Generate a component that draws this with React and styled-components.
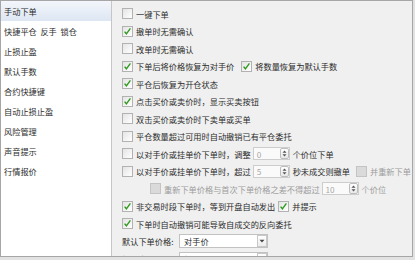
import React from 'react';
import styled, { createGlobalStyle } from 'styled-components';

const GlobalStyle = createGlobalStyle`
  html, body {
    margin: 0;
    padding: 0;
    background: #e2e2e2;
  }
  body {
    font-family: "Noto Sans CJK SC", "Noto Sans", sans-serif;
    font-size: 8.2px;
    color: #2b2b2b;
  }
`;

const Frame = styled.div`
  width: 413px;
  height: 257px;
  box-sizing: border-box;
  border: 1px solid #a6a6a6;
  display: flex;
  overflow: hidden;
`;

const Sidebar = styled.div`
  width: 110px;
  flex-shrink: 0;
  background: #fff;
  border-right: 1px solid #c6c6c6;
`;

const NavItem = styled.div`
  height: 20px;
  line-height: 20px;
  padding-left: 3px;
  white-space: pre;
  background: ${(p) => (p.$active ? 'linear-gradient(#f3f6fb, #dde6f3)' : 'transparent')};
`;

const Content = styled.div`
  flex: 1;
  background: #f0f0f0;
  padding: 4px 0 0 10px;
`;

const Row = styled.div`
  height: 17.5px;
  display: flex;
  align-items: center;
  padding-left: ${(p) => p.$indent || 0}px;
  white-space: nowrap;
`;

const Box = styled.span`
  width: 11px;
  height: 11px;
  box-sizing: border-box;
  flex-shrink: 0;
  display: inline-flex;
  align-items: center;
  justify-content: center;
  border: 1px solid ${(p) => (p.$disabled ? '#c4c4c4' : '#b2b2b2')};
  background: ${(p) => (p.$disabled ? '#dadada' : 'linear-gradient(135deg, #e4e4e4, #ffffff)')};
  margin-left: ${(p) => p.$ml || 0}px;
`;

const Label = styled.span`
  margin-left: ${(p) => (p.$ml === undefined ? 3 : p.$ml)}px;
  color: ${(p) => (p.$muted ? '#9c9c9c' : '#2b2b2b')};
  width: ${(p) => (p.$width ? `${p.$width}px` : 'auto')};
  flex-shrink: 0;
`;

const Spin = styled.span`
  width: 37px;
  height: 13px;
  box-sizing: border-box;
  margin-left: ${(p) => p.$ml || 2}px;
  border: 1px solid #cdcdcd;
  background: #fafafa;
  display: flex;
  align-items: center;
  justify-content: space-between;
  padding-left: 3px;
  color: #a8a8a8;
`;

const SpinButton = styled.span`
  width: 9px;
  height: 11px;
  box-sizing: border-box;
  border: 1px solid #bdbdbd;
  border-radius: 2px;
  background: linear-gradient(#ffffff, #e8e8e8);
  display: flex;
  align-items: center;
  justify-content: center;
`;

const Select = styled.span`
  width: 89px;
  height: 14px;
  box-sizing: border-box;
  border: 1px solid #c2c2c2;
  background: #fff;
  display: flex;
  align-items: center;
  justify-content: space-between;
  padding-left: 4px;
`;

const SelectButton = styled.span`
  width: 10px;
  height: 12px;
  box-sizing: border-box;
  border: 1px solid #c8c8c8;
  background: linear-gradient(#ffffff, #ececec);
  display: flex;
  align-items: center;
  justify-content: center;
`;

const Tick = () => (
  <svg width="9" height="9" viewBox="0 0 9 9">
    <path d="M1.6 4.6 L3.4 6.8 L7.4 1.4" fill="none" stroke="#2f9a1e" strokeWidth="1.4" />
  </svg>
);

const Check = ({ checked, disabled, ml }) => (
  <Box $disabled={disabled} $ml={ml}>
    {checked && <Tick />}
  </Box>
);

const SpinBox = ({ value, ml }) => (
  <Spin $ml={ml}>
    <span>{value}</span>
    <SpinButton>
      <svg width="5" height="7" viewBox="0 0 5 7">
        <path d="M2.5 0.5 L4.5 2.8 L0.5 2.8 Z M2.5 6.5 L4.5 4.2 L0.5 4.2 Z" fill="#555" />
      </svg>
    </SpinButton>
  </Spin>
);

const Dropdown = ({ value }) => (
  <Select>
    <span>{value}</span>
    <SelectButton>
      <svg width="6" height="4" viewBox="0 0 6 4">
        <path d="M0.5 0.8 L5.5 0.8 L3 3.5 Z" fill="#444" />
      </svg>
    </SelectButton>
  </Select>
);

const navItems = ['手动下单', '快捷平仓  反手  锁仓', '止损止盈', '默认手数', '合约快捷键', '自动止损止盈', '风险管理', '声音提示', '行情报价'];

export default function App() {
  return (
    <>
      <GlobalStyle />
      <Frame>
        <Sidebar>
          {navItems.map((item, i) => (
            <NavItem key={item} $active={i === 0}>{item}</NavItem>
          ))}
        </Sidebar>
        <Content>
          <Row><Check /><Label>一键下单</Label></Row>
          <Row><Check checked /><Label>撤单时无需确认</Label></Row>
          <Row><Check /><Label>改单时无需确认</Label></Row>
          <Row>
            <Check checked /><Label>下单后将价格恢复为对手价</Label>
            <Check checked ml={7} /><Label>将数量恢复为默认手数</Label>
          </Row>
          <Row><Check checked /><Label>平仓后恢复为开仓状态</Label></Row>
          <Row><Check checked /><Label>点击买价或卖价时，显示买卖按钮</Label></Row>
          <Row><Check /><Label>双击买价或卖价时下卖单或买单</Label></Row>
          <Row><Check /><Label>平仓数量超过可用时自动撤销已有平仓委托</Label></Row>
          <Row>
            <Check /><Label>以对手价或挂单价下单时，调整</Label>
            <SpinBox value="0" />
            <Label>个价位下单</Label>
          </Row>
          <Row>
            <Check /><Label>以对手价或挂单价下单时，超过</Label>
            <SpinBox value="5" />
            <Label>秒未成交则撤单</Label>
            <Check disabled ml={6} /><Label $muted>并重新下单</Label>
          </Row>
          <Row $indent={28}>
            <Check disabled /><Label $muted>重新下单价格与首次下单价格之差不得超过</Label>
            <SpinBox value="10" />
            <Label $muted>个价位</Label>
          </Row>
          <Row>
            <Check checked /><Label>非交易时段下单时，等到开盘自动发出</Label>
            <Check checked ml={3} /><Label>并提示</Label>
          </Row>
          <Row><Check checked /><Label>下单时自动撤销可能导致自成交的反向委托</Label></Row>
          <Row>
            <Label $ml={0} $width={57}>默认下单价格:</Label>
            <Dropdown value="对手价" />
          </Row>
          <Row>
            <Label $ml={0} $width={57}>投保类别:</Label>
            <Dropdown value="投机" />
          </Row>
        </Content>
      </Frame>
    </>
  );
}
